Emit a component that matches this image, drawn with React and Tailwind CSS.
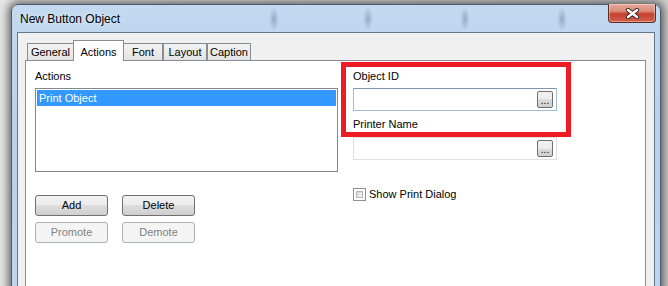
import React from "react";

const TABS = [
  { name: "General", w: "w-[47px]" },
  { name: "Actions", w: "w-[51px]", active: true },
  { name: "Font", w: "w-[40px]" },
  { name: "Layout", w: "w-[44px]" },
  { name: "Caption", w: "w-[44px]" },
];

function Tab({ tab }) {
  if (tab.active) {
    return (
      <div className={`${tab.w} relative z-10 -mb-px -mx-px flex h-[21px] items-start justify-center border border-b-0 border-[#898c95] bg-white pt-[3px] text-[11px] text-black`}>
        {tab.name}
      </div>
    );
  }
  return (
    <div className={`${tab.w} flex h-[17px] items-center justify-center border border-b-0 border-[#898c95] bg-[linear-gradient(to_bottom,#f3f3f3,#e3e3e3)] pt-px text-[11px] text-black`}>
      {tab.name}
    </div>
  );
}

function WinButton({ children, disabled }) {
  return (
    <div
      className={
        disabled
          ? "flex h-[21px] w-[73px] items-center justify-center rounded-[3px] border border-[#adb2b5] bg-[#f4f4f4] text-[11px] text-[#838383]"
          : "flex h-[21px] w-[73px] items-center justify-center rounded-[3px] border border-[#707070] bg-[linear-gradient(to_bottom,#f2f2f2_0%,#ebebeb_50%,#dddddd_50%,#cfcfcf_100%)] text-[11px] text-black"
      }
    >
      {children}
    </div>
  );
}

function BrowseBox({ active }) {
  return (
    <div
      className={`flex h-[23px] w-[204px] items-center justify-end border bg-white pr-[3px] ${
        active ? "border-[#a4bcd6] border-t-[#7f96b3]" : "border-[#dde1e6]"
      }`}
    >
      <div className="flex h-[17px] w-[16px] items-end justify-center rounded-[2px] border border-[#707070] bg-[linear-gradient(to_bottom,#f2f2f2_0%,#ebebeb_50%,#dddddd_50%,#cfcfcf_100%)] pb-[1px] text-[10px] leading-[10px] text-black">
        ...
      </div>
    </div>
  );
}

function CloseButton() {
  return (
    <div className="flex h-[19px] w-[48px] items-center justify-center rounded-b-[4px] border border-t-0 border-[#5b2a24] bg-[linear-gradient(to_bottom,#e9a99b_0%,#d98a7a_40%,#c4402b_55%,#d4634f_100%)] shadow-[inset_0_0_0_1px_rgba(255,255,255,0.35)]">
      <svg width="15" height="11" viewBox="0 0 15 11">
        <path d="M3 2 L12 9 M12 2 L3 9" stroke="#3b2420" strokeWidth="4.2" strokeLinecap="round" />
        <path d="M3 2 L12 9 M12 2 L3 9" stroke="#ffffff" strokeWidth="2.4" strokeLinecap="round" />
      </svg>
    </div>
  );
}

export default function App() {
  return (
    <div className="relative h-[286px] w-[668px] overflow-hidden bg-[linear-gradient(to_right,#e6e6e6,#d0d0d0)] font-['Liberation_Sans',Arial,sans-serif]">
      <div className="ml-[11px] mt-[4px] w-[650px] rounded-t-[7px] border border-[#4c5a6b] bg-[radial-gradient(ellipse_5px_12px_at_262px_14px,rgba(70,90,115,0.35),transparent),radial-gradient(ellipse_5px_12px_at_356px_14px,rgba(70,90,115,0.35),transparent),radial-gradient(ellipse_5px_12px_at_453px_14px,rgba(70,90,115,0.35),transparent),radial-gradient(ellipse_5px_12px_at_550px_14px,rgba(70,90,115,0.35),transparent),linear-gradient(to_bottom,#c2d9f0_0%,#b8d1ec_40%,#bfd6ee_100%)] px-[5px] shadow-[0_0_9px_3px_rgba(0,0,0,0.55)]">
        {/* title bar */}
        <div className="-mx-[5px] flex h-[27px] items-start justify-between">
          <div className="pl-[8px] pt-[7px] text-[12px] leading-[14px] text-black [text-shadow:0_0_6px_rgba(255,255,255,0.9)]">
            New Button Object
          </div>
          <div className="-mt-px mr-[4px]">
            <CloseButton />
          </div>
        </div>

        {/* client area */}
        <div className="h-[300px] border border-[#63768c] bg-[#f0f0f0] pl-[7px] pr-[8px] pt-[7px]">
          <div className="flex h-[20px] items-end pl-[2px]">
            {TABS.map((t) => (
              <Tab key={t.name} tab={t} />
            ))}
          </div>

          <div className="flex h-[280px] border border-[#898c95] bg-white pl-[9px] pt-[9px] text-[11px] leading-[13px] text-black">
            {/* left column */}
            <div className="w-[303px]">
              <div>Actions</div>
              <div className="mt-[5px] h-[84px] border border-[#828790] p-px">
                <div className="h-[16px] bg-[#3399ff] pl-[2px] leading-[16px] text-white">Print Object</div>
              </div>
              <div className="mt-[23px] flex gap-[14px]">
                <WinButton>Add</WinButton>
                <WinButton>Delete</WinButton>
              </div>
              <div className="mt-[6px] flex gap-[14px]">
                <WinButton disabled>Promote</WinButton>
                <WinButton disabled>Demote</WinButton>
              </div>
            </div>

            {/* right column */}
            <div className="ml-[15px] w-[204px]">
              <div>Object ID</div>
              <div className="mt-[5px]">
                <BrowseBox active />
              </div>
              <div className="mt-[7px]">Printer Name</div>
              <div className="mt-[6px]">
                <BrowseBox />
              </div>
              <div className="mt-[28px] flex items-center">
                <div className="h-[13px] w-[13px] border border-[#8f8f8f] bg-white p-[2px]">
                  <div className="h-full w-full border border-[#b8b8b8] bg-[linear-gradient(135deg,#d4d4d4,#f7f7f7)]" />
                </div>
                <span className="ml-[3px]">Show Print Dialog</span>
              </div>
            </div>
          </div>
        </div>
      </div>

      {/* annotation highlight */}
      <div className="absolute left-[341px] top-[62px] h-[75px] w-[230px] border-[5px] border-[#ed1c24]" />
    </div>
  );
}
